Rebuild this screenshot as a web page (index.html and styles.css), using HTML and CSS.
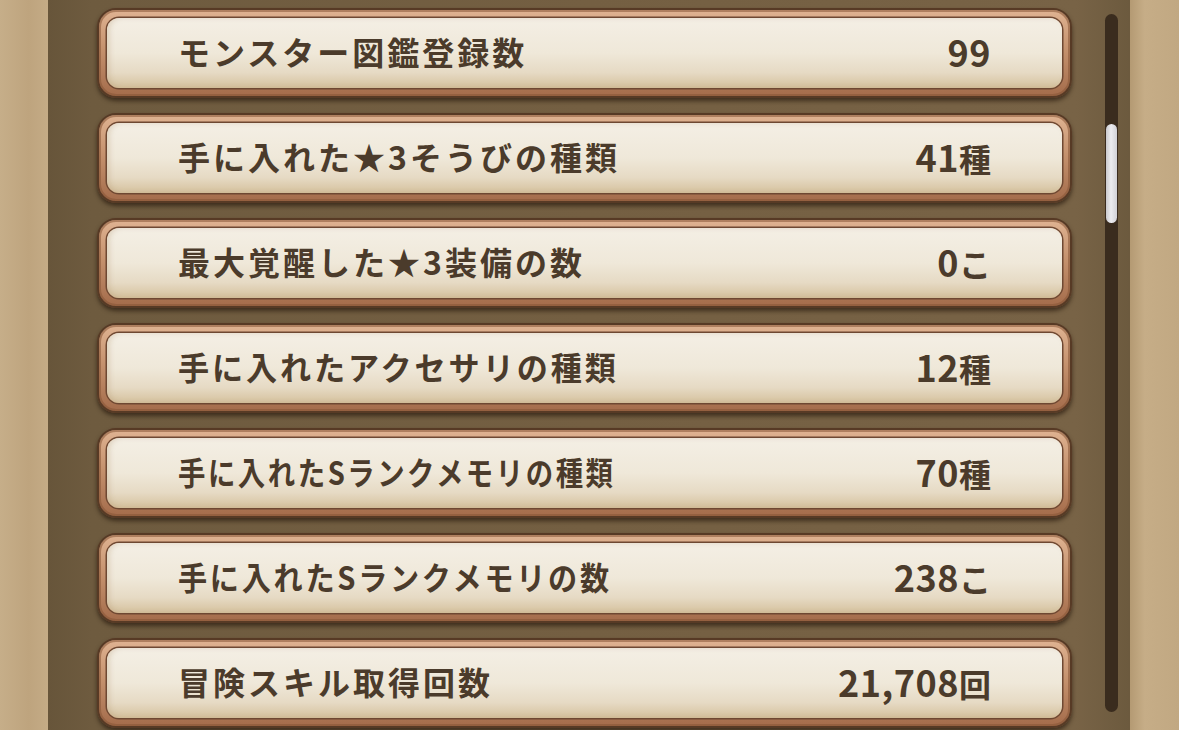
FILE: index.html
```html
<!DOCTYPE html>
<html lang="ja">
<head>
  <meta charset="UTF-8">
  <meta name="viewport" content="width=device-width, initial-scale=1.0">
  <title>冒険の記録</title>
  <link rel="stylesheet" href="styles.css">
</head>
<body>
  <div class="paper"></div>
  <div class="panel">
    <div class="list">
      <div class="stat"><div class="statInner"><span class="label">モンスター図鑑登録数</span><span class="value"><span class="num">99</span></span></div></div>
      <div class="stat"><div class="statInner"><span class="label">手に入れた★3そうびの種類</span><span class="value"><span class="num">41</span>種</span></div></div>
      <div class="stat"><div class="statInner"><span class="label">最大覚醒した★3装備の数</span><span class="value"><span class="num">0</span>こ</span></div></div>
      <div class="stat"><div class="statInner"><span class="label fit97">手に入れたアクセサリの種類</span><span class="value"><span class="num">12</span>種</span></div></div>
      <div class="stat"><div class="statInner"><span class="label fit86">手に入れたSランクメモリの種類</span><span class="value"><span class="num">70</span>種</span></div></div>
      <div class="stat"><div class="statInner"><span class="label fit91">手に入れたSランクメモリの数</span><span class="value"><span class="num">238</span>こ</span></div></div>
      <div class="stat"><div class="statInner"><span class="label">冒険スキル取得回数</span><span class="value"><span class="num">21,708</span>回</span></div></div>
    </div>
    <div class="scrollTrack">
      <div class="scrollThumb"></div>
    </div>
  </div>
  <div class="paper"></div>
</body>
</html>
```

FILE: styles.css
```css
body {
    margin: 0;
    height: 730px;
    overflow: hidden;
    display: flex;
    font-family: "Noto Sans CJK JP", "Noto Sans", sans-serif;
    background: #c5ac86;
}
.paper {
    width: 48px;
    flex: none;
    background: linear-gradient(90deg, #c6ae89 0%, #bea47e 60%, #c4ab86 100%);
}
.paper:last-child {
    width: 49px;
    background: linear-gradient(90deg, #b49a73 0%, #c6ad87 30%, #c1a882 100%);
}
.panel {
    flex: 1;
    display: flex;
    align-items: flex-start;
    background: linear-gradient(90deg, #67553a 0%, #6e5b3f 4%, #745f42 50%, #786346 95%, #6c5a3e 100%);
    overflow: hidden;
}
.list {
    width: 975px;
    flex: none;
    display: flex;
    flex-direction: column;
    gap: 15px;
    padding: 8px 0 0 49px;
}
.stat {
    height: 90px;
    box-sizing: border-box;
    padding: 8px;
    border: 2px solid #573a25;
    border-radius: 19px;
    background: linear-gradient(180deg, #dfb392 0%, #c5926e 45%, #a46c4b 100%);
    box-shadow: 0 3px 4px rgba(35, 22, 10, 0.65), inset 0 0 0 2px rgba(135, 85, 55, 0.55);
}
.statInner {
    height: 100%;
    box-sizing: border-box;
    display: flex;
    align-items: center;
    justify-content: space-between;
    padding: 0 71px 5px 71px;
    border-radius: 12px;
    background: linear-gradient(180deg, #f4efe5 0%, #efe8d9 50%, #e6dac4 78%, #d5c19d 100%);
    box-shadow: 0 0 0 1.5px #6e4832, inset 3px 0 5px rgba(170, 140, 100, 0.25);
    color: #4b3b2b;
    font-size: 32px;
    font-weight: bold;
}
.label {
    display: inline-block;
    white-space: nowrap;
    letter-spacing: 3px;
    transform-origin: left center;
}
/* long labels are squeezed to the same max width, like the game does */
.fit97 {
    transform: scaleX(0.972);
}
.fit91 {
    transform: scaleX(0.91);
}
.fit86 {
    transform: scaleX(0.855);
}
.value {
    white-space: nowrap;
}
.num {
    font-size: 36px;
    letter-spacing: 0.5px;
}
.scrollTrack {
    width: 13px;
    height: 698px;
    flex: none;
    margin: 14px 0 0 33px;
    border-radius: 7px;
    background: #3a2c1e;
    padding-top: 110px;
    box-sizing: border-box;
}
.scrollThumb {
    width: 11px;
    height: 99px;
    margin-left: 1px;
    border-radius: 6px;
    background: linear-gradient(90deg, #c9c9ce 0%, #ececf0 45%, #d2d2d7 100%);
}
```
